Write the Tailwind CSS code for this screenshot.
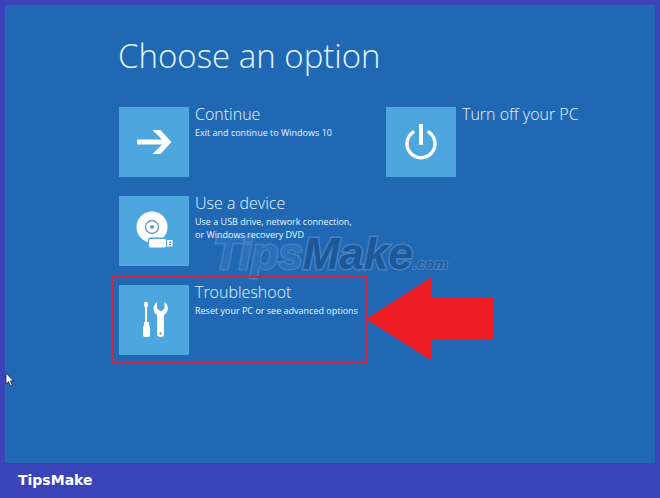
<!DOCTYPE html>
<html lang="en">
<head>
  <meta charset="UTF-8" />
  <meta name="viewport" content="width=device-width, initial-scale=1.0"/>
  <title>Choose an option</title>
  <script src="https://cdn.jsdelivr.net/npm/@tailwindcss/browser@4"></script>
</head>
<body class="flex min-h-screen flex-col bg-[#3b43b9] px-[5px] pt-[5px] font-['Open_Sans',sans-serif] text-[#e2f8ff]">
  <main class="relative flex-1 bg-[#2068b3] pt-[26px] pl-[113px]">
    <h1 class="text-[33px] leading-[50px] font-light">Choose an option</h1>

    <!-- watermark -->
    <div class="pointer-events-none absolute top-[219px] left-[208px] font-['Liberation_Sans',sans-serif] text-[44px] leading-[60px] font-bold whitespace-nowrap italic [-webkit-text-stroke:3px_#4482c2] [paint-order:stroke_fill]">
      <span class="text-[#2a70ba]">Tips</span><span class="text-[#1c5797]">Make</span><span class="text-[15px] text-[#1f5c9c] [-webkit-text-stroke:2px_#4482c2]">.com</span>
    </div>

    <div class="relative mt-[26px] ml-px grid grid-cols-[248px_1fr] gap-[19px]">
      <button class="flex items-start gap-[6px] text-left">
        <span class="flex size-[70px] shrink-0 items-center justify-center bg-[#4ea6de]">
          <svg class="size-[70px]" viewBox="0 0 70 70" fill="#fff">
            <path d="M18 32.500H43L33.500 23H41.500L52.500 35L41.500 47H33.500L43 37.500H18Z"/>
          </svg>
        </span>
        <span>
          <span class="block text-[16px] leading-[15px] font-light">Continue</span>
          <span class="mt-[4px] block text-[9px] leading-[13px]">Exit and continue to Windows 10</span>
        </span>
      </button>

      <button class="flex items-start gap-[6px] text-left">
        <span class="flex size-[70px] shrink-0 items-center justify-center bg-[#4ea6de]">
          <svg class="size-[70px]" viewBox="0 0 70 70" fill="none" stroke="#fff">
            <path d="M28.200 24.500A14 14 0 1 0 41.800 24.500" stroke-width="3.400"/>
            <path d="M35 17V38" stroke-width="4"/>
          </svg>
        </span>
        <span class="block text-[16px] leading-[15px] font-light">Turn off your PC</span>
      </button>

      <button class="flex items-start gap-[6px] text-left">
        <span class="flex size-[70px] shrink-0 items-center justify-center bg-[#4ea6de]">
          <svg class="size-[70px]" viewBox="0 0 70 70">
            <circle cx="33" cy="31" r="15.500" fill="#fff"/>
            <circle cx="33" cy="31" r="6.500" fill="none" stroke="#6c9db7" stroke-width="1.400"/>
            <circle cx="33" cy="31" r="1.800" fill="#4e87a8"/>
            <path d="M29 44Q29 41.500 31.500 41.500H54.500V52.500H31.500Q29 52.500 29 50Z" fill="#4ea6de"/>
            <rect x="30" y="43" width="17" height="8.500" rx="1.500" fill="#fff"/>
            <path d="M48 44H53.500V50.500H48Z" fill="#fff"/>
            <path d="M50 45.500H52V46.700H50ZM50 48H52V49.200H50Z" fill="#3c8fc4"/>
          </svg>
        </span>
        <span>
          <span class="block text-[16px] leading-[15px] font-light">Use a device</span>
          <span class="mt-[4px] block text-[9px] leading-[13px]">Use a USB drive, network connection,<br/>or Windows recovery DVD</span>
        </span>
      </button>

      <!-- highlighted option with its pointer arrow -->
      <button class="relative col-start-1 flex items-start gap-[6px] text-left">
        <span class="flex size-[70px] shrink-0 items-center justify-center bg-[#4ea6de]">
          <svg class="size-[70px]" viewBox="0 0 70 70" fill="#fff">
            <path d="M25.500 17H28.500L29.200 20L28 23V37H30V40L31 42V50Q31 52 29 52H26Q24 52 24 50V42L25 40V37H26V23L24.800 20Z"/>
            <path d="M38 17C33.500 20 33.500 27 38 30V49Q38 52 41.500 52Q45 52 45 49V30C50 27 50 20 45.500 17V23.500L42 26.500L38 23.500Z"/>
            <circle cx="41.500" cy="48.500" r="1.100" fill="#4e87a8"/>
          </svg>
        </span>
        <span>
          <span class="block text-[16px] leading-[15px] font-light">Troubleshoot</span>
          <span class="mt-[4px] block text-[9px] leading-[13px]">Reset your PC or see advanced options</span>
        </span>
        <span class="absolute -top-[9px] right-[-1px] -bottom-[8px] -left-[8px] border-2 border-[#cf2440]"></span>
        <svg class="absolute top-[-8px] left-[247px] h-[84px] w-[128px]" viewBox="0 0 128 84" fill="#ee1c25">
          <path d="M0 42L66 0V21H127V63H66V84Z"/>
        </svg>
      </button>
    </div>

    <svg class="absolute top-[367px] left-0 h-[15px] w-[10px]" viewBox="0 0 10 15">
      <path d="M1 1V12L3.500 9.700L5.500 14L7.300 13.200L5.400 9H8.500Z" fill="#fff" stroke="#123" stroke-width=".8"/>
    </svg>
  </main>

  <footer class="px-[13px] pt-[8px] pb-[9px] font-['DejaVu_Sans',sans-serif] text-[14px] leading-[18px] font-bold text-white">TipsMake</footer>
</body>
</html>
